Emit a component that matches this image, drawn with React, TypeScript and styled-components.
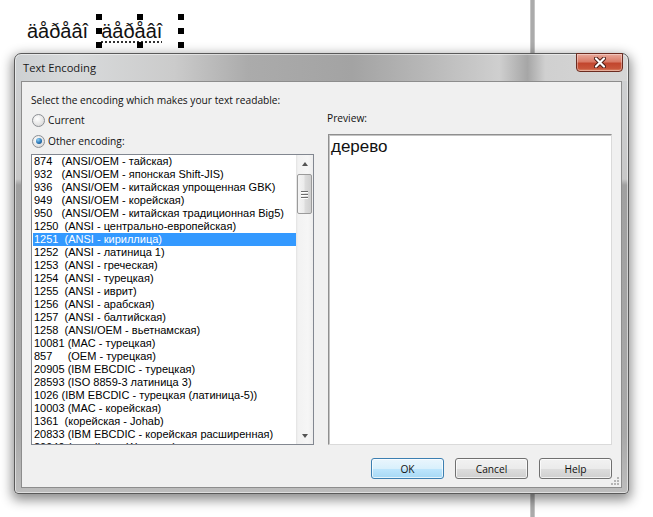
import React from "react";
import styled, { createGlobalStyle } from "styled-components";

const GlobalStyle = createGlobalStyle`
  html, body {
    margin: 0;
    padding: 0;
    background: #ffffff;
  }
  body {
    width: 653px;
    height: 517px;
    overflow: hidden;
    font-family: "Open Sans", "Noto Sans", sans-serif;
  }
`;

const Page = styled.div`
  position: relative;
  width: 653px;
  height: 517px;
  overflow: hidden;
  background: #ffffff;
`;

// the grey ruler line of the document behind the dialog
const PageLine = styled.div`
  position: absolute;
  left: 530px;
  top: 0;
  bottom: 0;
  width: 5px;
  background: linear-gradient(to right, #d2d2d2, #ababab 30%, #ababab 70%, #d2d2d2);
`;

const TopBar = styled.div`
  display: flex;
  align-items: flex-start;
  box-sizing: border-box;
  height: 53px;
  padding: 17px 0 0 27px;
  font-family: "Liberation Sans", Arial, sans-serif;
  font-size: 20px;
  line-height: 28px;
  color: #111;
`;

const Word = styled.span`
  display: inline-block;
  height: 28px;
`;

const Selection = styled.span`
  position: relative;
  display: inline-block;
  box-sizing: border-box;
  width: 82px;
  height: 28px;
  margin-left: 11px;
  padding-left: 2px;
  text-decoration: underline dotted #333;
  text-underline-offset: 3px;
`;

const Handle = styled.i<{ $x: number; $y: number }>`
  position: absolute;
  width: 6px;
  height: 6px;
  background: #000;
  left: ${(p) => `calc(${p.$x}% - 3px)`};
  top: ${(p) => `calc(${p.$y}% - 3px)`};
`;

const Dialog = styled.div`
  position: relative;
  z-index: 1;
  display: flex;
  flex-direction: column;
  box-sizing: border-box;
  width: 615px;
  height: 441px;
  margin-left: 14px;
  border: 1px solid #5a5a5a;
  border-radius: 7px 7px 4px 4px;
  background:
    linear-gradient(
        to right,
        #cdd0d2 0%,
        #d8dadb 10%,
        #cbcbcb 26%,
        #ababab 38%,
        #a3a3a3 55%,
        #b6b6b6 66%,
        #cfcfcf 79%,
        #a6a6a6 83.6%,
        #d0d0d0 86.5%,
        #d6d6d6 100%
      )
      top / 100% 27px no-repeat,
    linear-gradient(to bottom, #d0d2d4 0, #c8c8c8 125px, #a0a0a0 131px, #a9a9a9 380px, #bdbdbd 100%);
  box-shadow: 0 4px 12px 2px rgba(0, 0, 0, 0.45), inset 0 0 0 1px rgba(255, 255, 255, 0.5);
`;

const TitleBar = styled.div`
  display: flex;
  justify-content: space-between;
  align-items: flex-start;
  height: 27px;
  padding: 0 5px 0 8px;
`;

const Title = styled.span`
  font-size: 11.2px;
  line-height: 27px;
  color: #1a1a1a;
`;

const CloseButton = styled.div`
  display: flex;
  align-items: center;
  justify-content: center;
  box-sizing: border-box;
  width: 47px;
  height: 19px;
  margin-top: -1px;
  border: 1px solid #6b2b20;
  border-radius: 0 0 4px 4px;
  background: linear-gradient(to bottom, #e9a99b 0%, #d97a66 45%, #c2462e 55%, #c8553a 85%, #de8c6e 100%);
  box-shadow: inset 0 0 0 1px rgba(255, 255, 255, 0.35);
`;

const Client = styled.div`
  position: relative;
  display: flex;
  flex-direction: column;
  box-sizing: border-box;
  height: 407px;
  margin: 0 6px;
  padding: 10px 9px 8px 9px;
  border: 1px solid #8d8d8d;
  background: #f0f0f0;
  font-size: 10.2px;
  color: #111;
`;

const Prompt = styled.div`
  line-height: 16px;
`;

const Body = styled.div`
  display: grid;
  grid-template-columns: 283px 1fr;
  column-gap: 13px;
  margin-top: 4px;
`;

const LeftColumn = styled.div`
  display: flex;
  flex-direction: column;
  gap: 5px;
`;

const RadioRow = styled.label`
  display: flex;
  align-items: center;
  gap: 3px;
  height: 16px;
  margin-left: 1px;
  line-height: 16px;
`;

const Radio = styled.span<{ $checked?: boolean }>`
  position: relative;
  box-sizing: border-box;
  width: 13px;
  height: 13px;
  border: 1px solid #8c8f94;
  border-radius: 50%;
  background: radial-gradient(circle at 40% 35%, #ffffff 0%, #e6e6e6 55%, #cfcfcf 100%);

  &::after {
    content: "";
    display: ${(p) => (p.$checked ? "block" : "none")};
    position: absolute;
    left: 2.5px;
    top: 2.5px;
    width: 6px;
    height: 6px;
    border-radius: 50%;
    background: radial-gradient(circle at 35% 30%, #8fd0f5 0%, #2b78b8 55%, #0f3f6e 100%);
  }
`;

const ListBox = styled.div`
  display: flex;
  box-sizing: border-box;
  height: 291px;
  border: 1px solid #828790;
  background: #ffffff;
  overflow: hidden;
`;

const List = styled.div`
  flex: 1;
  padding-left: 1px;
  overflow: hidden;
`;

const Item = styled.div<{ $selected?: boolean }>`
  height: 13px;
  padding-left: 1px;
  font-family: "Liberation Sans", Arial, sans-serif;
  font-size: 11px;
  line-height: 13px;
  white-space: pre;
  color: ${(p) => (p.$selected ? "#ffffff" : "#000000")};
  background: ${(p) => (p.$selected ? "#3399ff" : "transparent")};
`;

const ScrollBar = styled.div`
  display: flex;
  flex-direction: column;
  width: 17px;
  background: linear-gradient(to right, #e2e2e2 0, #f2f2f2 2px, #f6f6f6 70%, #ededed 100%);
`;

const Arrow = styled.div<{ $down?: boolean }>`
  display: flex;
  align-items: center;
  justify-content: center;
  height: 17px;

  &::before {
    content: "";
    width: 0;
    height: 0;
    border-left: 3.5px solid transparent;
    border-right: 3.5px solid transparent;
    ${(p) => (p.$down ? "border-top: 4px solid #555;" : "border-bottom: 4px solid #555;")}
  }
`;

const Thumb = styled.div`
  display: flex;
  flex-direction: column;
  align-items: center;
  justify-content: center;
  gap: 2px;
  box-sizing: border-box;
  height: 40px;
  margin: 2px 1px 0;
  border: 1px solid #9b9b9b;
  border-radius: 2px;
  background: linear-gradient(to right, #f4f4f4 0%, #ececec 45%, #dcdcdc 55%, #cfcfcf 100%);
`;

const Grip = styled.span`
  width: 7px;
  height: 1px;
  background: #6e6e6e;
  box-shadow: 0 1px 0 #ffffff;
`;

const Track = styled.div`
  flex: 1;
`;

const RightColumn = styled.div`
  display: flex;
  flex-direction: column;
`;

const PreviewLabel = styled.div`
  line-height: 12px;
  margin-bottom: 10px;
`;

const PreviewBox = styled.div`
  box-sizing: border-box;
  height: 311px;
  margin-left: 1px;
  padding: 1px 2px;
  border: 1px solid;
  border-color: #8f8f8f #dadada #dadada #8f8f8f;
  box-shadow: inset 1px 1px 0 #c4c4c4;
  background: #ffffff;
  font-family: "Liberation Sans", Arial, sans-serif;
  font-size: 17px;
  line-height: 22px;
  color: #111;
`;

const Footer = styled.div`
  display: flex;
  justify-content: flex-end;
  gap: 11px;
  margin-top: 13px;
`;

const Button = styled.button<{ $default?: boolean }>`
  box-sizing: border-box;
  width: 73px;
  height: 21px;
  padding: 0;
  border: 1px solid ${(p) => (p.$default ? "#3c7fb1" : "#707070")};
  border-radius: 3px;
  background: ${(p) =>
    p.$default
      ? "linear-gradient(to bottom, #eaf6fd 0%, #d9f0fc 50%, #bee6fd 51%, #a7d9f5 100%)"
      : "linear-gradient(to bottom, #f2f2f2 0%, #ebebeb 50%, #dddddd 51%, #cfcfcf 100%)"};
  box-shadow: inset 0 0 0 1px rgba(255, 255, 255, 0.7);
  font-family: "Open Sans", "Noto Sans", sans-serif;
  font-size: 10.2px;
  color: #111;
`;

const SizeGrip = styled.svg`
  position: absolute;
  right: 1px;
  bottom: 1px;
`;

const encodings = [
  "874   (ANSI/OEM - тайская)",
  "932   (ANSI/OEM - японская Shift-JIS)",
  "936   (ANSI/OEM - китайская упрощенная GBK)",
  "949   (ANSI/OEM - корейская)",
  "950   (ANSI/OEM - китайская традиционная Big5)",
  "1250  (ANSI - центрально-европейская)",
  "1251  (ANSI - кириллица)",
  "1252  (ANSI - латиница 1)",
  "1253  (ANSI - греческая)",
  "1254  (ANSI - турецкая)",
  "1255  (ANSI - иврит)",
  "1256  (ANSI - арабская)",
  "1257  (ANSI - балтийская)",
  "1258  (ANSI/OEM - вьетнамская)",
  "10081 (MAC - турецкая)",
  "857     (OEM - турецкая)",
  "20905 (IBM EBCDIC - турецкая)",
  "28593 (ISO 8859-3 латиница 3)",
  "1026 (IBM EBCDIC - турецкая (латиница-5))",
  "10003 (MAC - корейская)",
  "1361  (корейская - Johab)",
  "20833 (IBM EBCDIC - корейская расширенная)",
  "20949 (корейская Wansung)",
];

const handles: [number, number][] = [
  [0, 0],
  [50, 0],
  [100, 0],
  [0, 50],
  [100, 50],
  [0, 100],
  [50, 100],
  [100, 100],
];

const App: React.FC = () => {
  return (
    <Page>
      <GlobalStyle />
      <PageLine />
      <TopBar>
        <Word>äåðåâî</Word>
        <Selection>
          äåðåâî
          {handles.map(([x, y]) => (
            <Handle key={`${x}-${y}`} $x={x} $y={y} />
          ))}
        </Selection>
      </TopBar>

      <Dialog>
        <TitleBar>
          <Title>Text Encoding</Title>
          <CloseButton>
            <svg width="12" height="11" viewBox="0 0 12 11">
              <path d="M2 1.5 L10 9.5 M10 1.5 L2 9.5" stroke="#4a1a12" strokeWidth="4" strokeLinecap="round" />
              <path d="M2 1.5 L10 9.5 M10 1.5 L2 9.5" stroke="#ffffff" strokeWidth="2.2" strokeLinecap="round" />
            </svg>
          </CloseButton>
        </TitleBar>

        <Client>
          <Prompt>Select the encoding which makes your text readable:</Prompt>
          <Body>
            <LeftColumn>
              <RadioRow>
                <Radio />
                Current
              </RadioRow>
              <RadioRow>
                <Radio $checked />
                Other encoding:
              </RadioRow>
              <ListBox>
                <List>
                  {encodings.map((name) => (
                    <Item key={name} $selected={name.startsWith("1251")}>
                      {name}
                    </Item>
                  ))}
                </List>
                <ScrollBar>
                  <Arrow />
                  <Thumb>
                    <Grip />
                    <Grip />
                    <Grip />
                  </Thumb>
                  <Track />
                  <Arrow $down />
                </ScrollBar>
              </ListBox>
            </LeftColumn>

            <RightColumn>
              <PreviewLabel>Preview:</PreviewLabel>
              <PreviewBox>дерево</PreviewBox>
            </RightColumn>
          </Body>

          <Footer>
            <Button $default>OK</Button>
            <Button>Cancel</Button>
            <Button>Help</Button>
          </Footer>

          <SizeGrip width="10" height="10" viewBox="0 0 10 10">
            {[
              [7, 1],
              [4, 4],
              [7, 4],
              [1, 7],
              [4, 7],
              [7, 7],
            ].map(([x, y]) => (
              <rect key={`${x}-${y}`} x={x} y={y} width="2" height="2" fill="#b5b5b5" />
            ))}
          </SizeGrip>
        </Client>
      </Dialog>
    </Page>
  );
};

export default App;
